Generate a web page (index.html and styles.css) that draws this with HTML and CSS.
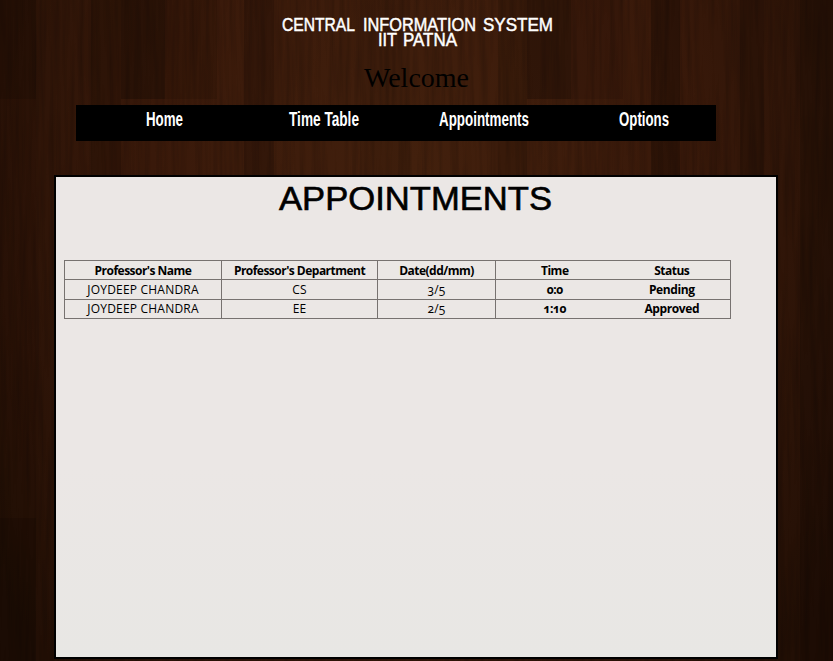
FILE: index.html
```
<!DOCTYPE html>
<html lang="en">
<head>
<meta charset="utf-8">
<title>Appointments</title>
<link rel="stylesheet" href="styles.css">
</head>
<body>
<svg class="wood" viewBox="0 0 833 661" preserveAspectRatio="none" aria-hidden="true">
  <defs>
    <filter id="grain" x="0" y="0" width="100%" height="100%">
      <feTurbulence type="fractalNoise" baseFrequency="0.2 0.009" numOctaves="3" seed="7"/>
      <feColorMatrix values="0 0 0 0 0  0 0 0 0 0  0 0 0 0 0  1.8 0 0 0 -0.7"/>
    </filter>
    <radialGradient id="glow" gradientUnits="userSpaceOnUse" cx="0" cy="0" r="1" gradientTransform="translate(416 165) scale(530 680)">
      <stop offset="0" stop-color="#42200d"/>
      <stop offset=".5" stop-color="#39190a"/>
      <stop offset=".8" stop-color="#2b1307"/>
      <stop offset="1" stop-color="#220f05"/>
    </radialGradient>
  </defs>
  <rect width="833" height="661" fill="url(#glow)"/>
  <g fill="#000">
    <rect width="36" height="99" opacity=".16"/>
    <rect y="99" width="36" height="419" opacity=".06"/>
    <rect y="518" width="36" height="143" opacity=".18"/>
    <rect x="91" width="30" height="180" opacity=".13"/>
    <rect x="121" width="44" height="99" opacity=".24"/>
    <rect x="165" width="52" height="99" opacity=".1"/>
    <rect x="244" width="30" height="180" opacity=".16"/>
    <rect x="360" width="50" height="180" opacity=".05"/>
    <rect x="498" width="29" height="180" opacity=".1"/>
    <rect x="527" width="44" height="99" opacity=".22"/>
    <rect x="571" width="52" height="99" opacity=".08"/>
    <rect x="651" width="29" height="180" opacity=".22"/>
    <rect x="740" width="24" height="180" opacity=".12"/>
    <rect x="800" width="33" height="661" opacity=".14"/>
  </g>
  <rect width="833" height="661" filter="url(#grain)" opacity=".2"/>
</svg>

<header class="header">
  <svg class="brand" width="280" height="36" role="heading" aria-level="1">
    <text x="5" y="18" textLength="73" lengthAdjust="spacingAndGlyphs">CENTRAL</text>
    <text x="86" y="18" textLength="113" lengthAdjust="spacingAndGlyphs">INFORMATION</text>
    <text x="206" y="18" textLength="70" lengthAdjust="spacingAndGlyphs">SYSTEM</text>
    <text x="101" y="33" textLength="19" lengthAdjust="spacingAndGlyphs">IIT</text>
    <text x="126" y="33" textLength="54" lengthAdjust="spacingAndGlyphs">PATNA</text>
  </svg>
  <p class="welcome">Welcome</p>
</header>

<nav class="nav">
  <a><svg width="37" height="32"><text y="21" textLength="37" lengthAdjust="spacingAndGlyphs">Home</text></svg></a>
  <a><svg width="70" height="32"><text y="21" textLength="70" lengthAdjust="spacingAndGlyphs">Time Table</text></svg></a>
  <a><svg width="90" height="32"><text y="21" textLength="90" lengthAdjust="spacingAndGlyphs">Appointments</text></svg></a>
  <a><svg width="50" height="32"><text y="21" textLength="50" lengthAdjust="spacingAndGlyphs">Options</text></svg></a>
</nav>

<main class="panel">
  <svg class="heading" width="280" height="44" role="heading" aria-level="2">
    <text x="3" y="33" textLength="273" lengthAdjust="spacingAndGlyphs">APPOINTMENTS</text>
  </svg>
  <table class="appointments">
    <colgroup><col class="name"><col class="dept"><col class="date"><col class="time"><col class="status"></colgroup>
    <tr class="titles"><th>Professor's Name</th><th>Professor's Department</th><th>Date(dd/mm)</th><th>Time</th><th>Status</th></tr>
    <tr><td>JOYDEEP CHANDRA</td><td>CS</td><td>3/5</td><th>0:0</th><th>Pending</th></tr>
    <tr><td>JOYDEEP CHANDRA</td><td>EE</td><td>2/5</td><th>1:10</th><th>Approved</th></tr>
  </table>
</main>
</body>
</html>
```
FILE: styles.css
```
* { box-sizing: border-box; }
body {
  margin: 0;
  height: 661px;
  overflow: hidden;
  background: #2b1206;
}
svg { display: block; overflow: visible; }
.wood {
  position: absolute;
  inset: 0;
  width: 100%;
  height: 100%;
  z-index: -1;
}
.header {
  height: 105px;
  padding-top: 13px;
  display: flex;
  flex-direction: column;
  align-items: center;
}
.brand {
  font: 19px "Liberation Sans", sans-serif;
  fill: #fff;
  stroke: #fff;
  stroke-width: .5px;
}
.welcome {
  margin: 11px 0 0;
  font: 28px/36px "Liberation Serif", serif;
  color: #000;
}
.nav {
  display: flex;
  width: 640px;
  height: 36px;
  margin-left: 76px;
  padding-left: 8px;
  background: #000;
  font: 700 21px "Liberation Sans", sans-serif;
  fill: #fff;
}
.nav a {
  flex: 0 0 160px;
  display: flex;
  justify-content: center;
}
.nav a:last-child { margin-right: -8px; }
.panel {
  width: 724px;
  height: 484px;
  margin: 34px 0 0 54px;
  padding: 0 8px;
  border: 2px solid #000;
  background: linear-gradient(#ebe7e5, #ebe7e5 60%, #e8e7e4);
}
.heading {
  margin: 0 auto;
  font: 33px "Liberation Sans", sans-serif;
  fill: #000;
  stroke: #000;
  stroke-width: .6px;
}
.appointments {
  width: 666px;
  margin-top: 39px;
  border: 1px solid #777270;
  border-collapse: collapse;
  table-layout: fixed;
  font: 12px/17px "Open Sans", "Noto Sans", sans-serif;
  font-variant-numeric: oldstyle-nums;
  text-align: center;
  color: #000;
}
.appointments tr { height: 19.4px; border-bottom: 1px solid #777270; }
.appointments th, .appointments td { padding: 0; white-space: nowrap; }
.appointments th { letter-spacing: -.4px; }
.appointments .titles th { letter-spacing: -.52px; }
.appointments td { letter-spacing: .2px; }
.appointments tr > :nth-child(-n+3) { border-right: 1px solid #777270; }
.name { width: 157px; }
.dept { width: 156px; }
.date { width: 118px; }
.time { width: 118px; }
.status { width: 117px; }
```
